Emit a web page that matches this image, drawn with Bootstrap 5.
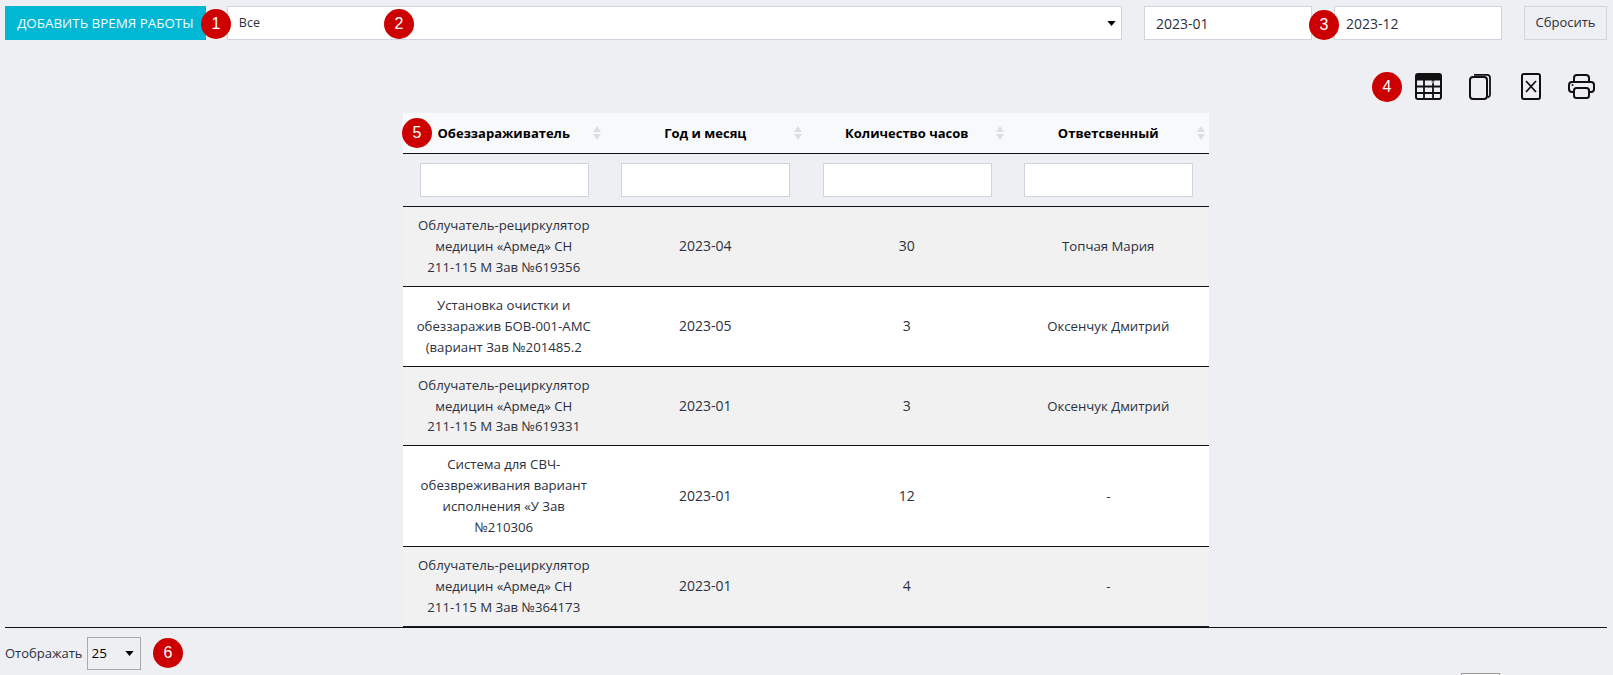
<!DOCTYPE html>
<html lang="ru">
<head>
<meta charset="utf-8">
<title>Время работы</title>
<link href="https://cdn.jsdelivr.net/npm/bootstrap@5.3.0/dist/css/bootstrap.min.css" rel="stylesheet">
<style>
html,body{height:675px;overflow:hidden}
body{background:#eeeff3;font-family:"Open Sans",sans-serif;font-size:14px;line-height:21px;color:#2b3040;position:relative}
.page-wrap{padding:6px 6px 0 5px}
.top-bar{height:34px}
.add-btn{width:201px;height:34px;background:#00b8d4;color:#f4fdff;border:0;border-radius:0;font-size:13.4px;padding:0;font-weight:400;--bs-btn-hover-bg:#00b8d4;--bs-btn-hover-color:#f4fdff}
.fld{height:34px;border:1px solid #d0d4de;border-radius:0;background-color:#fff;color:#2b3040;font-size:14px;padding:0 11px;box-shadow:none}
.sel-main{width:896px;margin-left:21px;font-size:12.5px;padding-left:11px;background-image:url("data:image/svg+xml,%3Csvg xmlns='http://www.w3.org/2000/svg' viewBox='0 0 10 6'%3E%3Cpath d='M0 0h10L5 6z' fill='%23000'/%3E%3C/svg%3E");background-size:9px 5px;background-position:right 5px center}
.date-fld{width:168px}
.date-one{margin-left:22px}
.date-two{margin-left:22px}
.reset-btn{width:83px;height:34px;margin-left:22px;background:#eeeff3;border:1px solid #d0d4de;border-radius:0;color:#2b3040;font-size:13px;padding:0}
.tool-row{height:27px;margin-top:33px;padding-right:12px}
.tool-ico{display:block}
.ico-copy{margin-left:27px}
.ico-xls{margin-left:30px}
.ico-print{margin-left:27px}
.data-wrap{width:806px;margin:13px auto 0;}
.work-table{--bs-table-bg:transparent;--bs-table-striped-bg:#f1f1f1;--bs-table-striped-color:#2b3040;--bs-table-color:#2b3040;border-collapse:separate;border-spacing:0;margin:0;table-layout:fixed;font-size:13.2px;text-align:center}
.work-table>thead th{height:41px;background:#f8f9fb;border-bottom:1px solid #111;color:#000;font-weight:700;vertical-align:middle;padding:0 16px;position:relative;font-size:13px}
.work-table>thead td{height:53px;background:transparent;border-bottom:1px solid #111;padding:9px 15px 9px 16.6px;vertical-align:middle}
.work-table>tbody>tr>td{padding:8.2px 8px;vertical-align:middle;border-bottom:1px solid #111;line-height:20.8px}
.work-table>tbody>tr>td.num-cell{font-size:14px}
.work-table>tbody>tr:nth-child(even)>td{background:#fff}
.work-table>tbody>tr:last-child>td{border-bottom:1px solid #1a1d29}
.filter-in{display:block;width:169px;height:34px;border:1px solid #d0d4de;background:#fff;border-radius:0}
.sort-mark{position:absolute;right:4px;top:13px;width:8px;height:14px;display:flex;flex-direction:column;justify-content:space-between}
.sort-mark i{display:block;width:0;height:0;border-left:4px solid transparent;border-right:4px solid transparent}
.sort-mark i:first-child{border-bottom:6px solid #dcdedf}
.sort-mark i:last-child{border-top:6px solid #dcdedf}
.foot-rule{position:absolute;left:5px;right:6px;top:627px;height:1px;background:#111}
.foot-row{position:absolute;left:5px;top:637px;height:33px;gap:4px;color:#2b3040;font-size:13px}
.len-sel{width:54px;height:33px;border:1px solid #a9a9a9;border-radius:0;background-color:transparent;font-size:13.5px;color:#000;padding:0 4px;font-family:"Open Sans",sans-serif;background-image:url("data:image/svg+xml,%3Csvg xmlns='http://www.w3.org/2000/svg' viewBox='0 0 10 6'%3E%3Cpath d='M0 0h10L5 6z' fill='%23000'/%3E%3C/svg%3E");background-size:9px 5px;background-position:right 6px center}
.page-box{position:absolute;left:1461px;top:673px;width:39px;height:20px;border:1px solid #999;background:#fff}
.note-dot{position:absolute;width:30px;height:30px;border-radius:50%;background:#cc0000;color:#fff;font-family:"Liberation Sans",sans-serif;font-size:16px;line-height:30px;text-align:center;transform:translate(-15px,-15px)}
.d1{left:216px;top:24px}.d2{left:399px;top:24px}.d3{left:1324px;top:25px}.d4{left:1387px;top:87px}.d5{left:417px;top:133px}.d6{left:168px;top:653px}
</style>
</head>
<body>
<div class="page-wrap">
  <div class="top-bar d-flex align-items-center">
    <button class="btn add-btn" type="button">ДОБАВИТЬ ВРЕМЯ РАБОТЫ</button>
    <select class="form-select fld sel-main"><option>Все</option></select>
    <input class="form-control fld date-fld date-one" type="text" value="2023-01">
    <input class="form-control fld date-fld date-two" type="text" value="2023-12">
    <button class="btn reset-btn" type="button">Сбросить</button>
  </div>
  <div class="tool-row d-flex justify-content-end align-items-center">
    <svg class="tool-ico" width="27" height="27" viewBox="0 0 27 27"><rect x="1" y="1" width="25" height="25" rx="2" fill="none" stroke="#111" stroke-width="2"/><rect x="1" y="1" width="25" height="6.5" fill="#111"/><path d="M1 13.500h25M1 20h25M9 7v19M18 7v19" stroke="#111" stroke-width="1.8" fill="none"/><path d="M16 8h4l-2 3z" fill="#8b8b99"/></svg>
    <svg class="tool-ico ico-copy" width="22" height="27" viewBox="0 0 22 27"><rect x="1" y="4" width="17" height="22" rx="3" fill="none" stroke="#111" stroke-width="2"/><path d="M5 1.800h13a3 3 0 0 1 3 3v17a3 3 0 0 1-2 2.500" fill="none" stroke="#111" stroke-width="1.8"/></svg>
    <svg class="tool-ico ico-xls" width="20" height="27" viewBox="0 0 20 27"><rect x="1" y="1" width="18" height="25" rx="2" fill="none" stroke="#111" stroke-width="2"/><path d="M5 8l10 11M15 8l-10 11" stroke="#111" stroke-width="1.8" fill="none"/></svg>
    <svg class="tool-ico ico-print" width="27" height="25" viewBox="0 0 27 25"><path d="M6 8V4a3 3 0 0 1 3-3h9a3 3 0 0 1 3 3v4" fill="none" stroke="#111" stroke-width="2"/><path d="M6 18H4a3 3 0 0 1-3-3v-4a3 3 0 0 1 3-3h19a3 3 0 0 1 3 3v4a3 3 0 0 1-3 3h-2" fill="none" stroke="#111" stroke-width="2"/><rect x="6" y="14" width="15" height="10" rx="2.5" fill="none" stroke="#111" stroke-width="2"/><circle cx="4.500" cy="11" r="1" fill="#111"/></svg>
  </div>
  <div class="data-wrap">
    <table class="table table-striped work-table">
      <thead>
        <tr>
          <th>Обеззараживатель<span class="sort-mark"><i></i><i></i></span></th>
          <th>Год и месяц<span class="sort-mark"><i></i><i></i></span></th>
          <th>Количество часов<span class="sort-mark"><i></i><i></i></span></th>
          <th>Ответсвенный<span class="sort-mark"><i></i><i></i></span></th>
        </tr>
        <tr>
          <td><input class="filter-in" type="text"></td>
          <td><input class="filter-in" type="text"></td>
          <td><input class="filter-in" type="text"></td>
          <td><input class="filter-in" type="text"></td>
        </tr>
      </thead>
      <tbody>
        <tr><td>Облучатель-рециркулятор<br>медицин «Армед» СН<br>211-115 М Зав №619356</td><td class="num-cell">2023-04</td><td class="num-cell">30</td><td>Топчая Мария</td></tr>
        <tr><td>Установка очистки и<br>обеззаражив БОВ-001-АМС<br>(вариант Зав №201485.2</td><td class="num-cell">2023-05</td><td class="num-cell">3</td><td>Оксенчук Дмитрий</td></tr>
        <tr><td>Облучатель-рециркулятор<br>медицин «Армед» СН<br>211-115 М Зав №619331</td><td class="num-cell">2023-01</td><td class="num-cell">3</td><td>Оксенчук Дмитрий</td></tr>
        <tr><td>Система для СВЧ-<br>обезвреживания вариант<br>исполнения «У Зав<br>№210306</td><td class="num-cell">2023-01</td><td class="num-cell">12</td><td>-</td></tr>
        <tr><td>Облучатель-рециркулятор<br>медицин «Армед» СН<br>211-115 М Зав №364173</td><td class="num-cell">2023-01</td><td class="num-cell">4</td><td>-</td></tr>
      </tbody>
    </table>
  </div>
</div>
<div class="foot-rule"></div>
<div class="foot-row d-flex align-items-center">
  <span>Отображать</span>
  <select class="form-select len-sel"><option>25</option></select>
</div>
<div class="page-box"></div>
<div class="note-dot d1">1</div>
<div class="note-dot d2">2</div>
<div class="note-dot d3">3</div>
<div class="note-dot d4">4</div>
<div class="note-dot d5">5</div>
<div class="note-dot d6">6</div>
</body>
</html>
